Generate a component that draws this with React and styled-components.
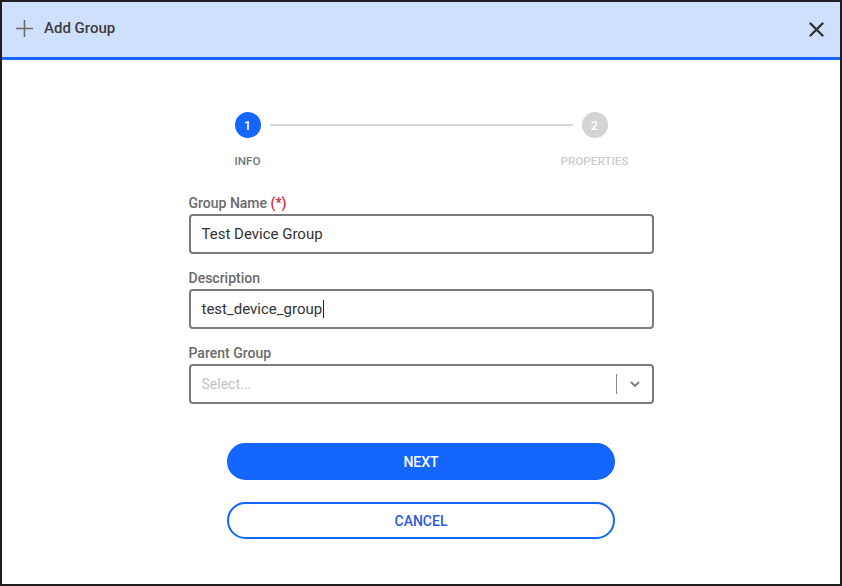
import React from 'react'
import styled, { createGlobalStyle } from 'styled-components'

const GlobalStyle = createGlobalStyle`
  html, body {
    margin: 0;
    padding: 0;
    background: #fff;
  }
  body {
    font-family: Roboto, "Liberation Sans", Arial, sans-serif;
  }
`

const Frame = styled.div`
  width: 842px;
  height: 586px;
  box-sizing: border-box;
  border: 2px solid #1f1f1f;
  display: flex;
  flex-direction: column;
  background: #fff;
`

const Header = styled.header`
  height: 55px;
  flex-shrink: 0;
  display: flex;
  align-items: center;
  padding: 0 16px 0 13px;
  background: #cfe0fc;
  border-bottom: 3px solid #1565ff;
`

const HeaderLead = styled.div`
  flex: 1;
  display: flex;
  align-items: center;
  gap: 10px;
  margin-bottom: 3px;
`

const Title = styled.h1`
  margin: 0;
  font-size: 15px;
  font-weight: 500;
  color: #3d3d3d;
`

const IconButton = styled.button`
  border: 0;
  background: none;
  padding: 0;
  display: flex;
  cursor: pointer;
`

const Body = styled.main`
  flex: 1;
  display: flex;
  flex-direction: column;
  align-items: center;
  padding-top: 52px;
`

const Stepper = styled.div`
  display: flex;
  width: 373px;
`

const Step = styled.div`
  width: 26px;
  display: flex;
  flex-direction: column;
  align-items: center;
  gap: 17px;
`

const Circle = styled.div`
  width: 26px;
  height: 26px;
  border-radius: 50%;
  background: ${p => (p.$active ? '#1565ff' : '#d3d3d3')};
  color: #fff;
  font-size: 13px;
  font-weight: 500;
  display: flex;
  align-items: center;
  justify-content: center;
`

const StepLabel = styled.span`
  white-space: nowrap;
  font-size: 11.7px;
  line-height: 13px;
  font-weight: 500;
  color: ${p => (p.$active ? '#757575' : '#cdcdcd')};
`

const Connector = styled.div`
  flex: 1;
  height: 2px;
  margin: 12px 9px 0;
  background: #d6d6d6;
`

const Form = styled.form`
  width: 465px;
  margin-top: 27px;
  display: flex;
  flex-direction: column;
  gap: 16px;
`

const Field = styled.div`
  display: flex;
  flex-direction: column;
  gap: 3px;
`

const Label = styled.label`
  font-size: 14px;
  line-height: 16px;
  font-weight: 500;
  color: #6b6b6b;
`

const Required = styled.span`
  color: #d0283a;
`

const TextBox = styled.div`
  height: 40px;
  box-sizing: border-box;
  border: 2px solid #7a7a7a;
  border-radius: 4px;
  padding: 0 11px;
  display: flex;
  align-items: center;
  font-size: 15px;
  color: ${p => (p.$placeholder ? '#c2c2c2' : '#333')};
  ${p => p.$placeholder && 'font-size: 14px;'}
`

const Caret = styled.span`
  width: 1px;
  height: 18px;
  background: #222;
  margin-left: 1px;
`

const SelectValue = styled.span`
  flex: 1;
`

const Divider = styled.span`
  width: 1px;
  height: 20px;
  background: #8a8a8a;
  margin-right: 12px;
`

const Actions = styled.div`
  width: 388px;
  margin-top: 39px;
  display: flex;
  flex-direction: column;
  gap: 22px;
`

const Button = styled.button`
  height: 37px;
  border-radius: 19px;
  border: 2px solid #1565ff;
  background: ${p => (p.$primary ? '#1565ff' : '#fff')};
  color: ${p => (p.$primary ? '#fff' : '#2b58e8')};
  font-family: inherit;
  font-size: 14px;
  font-weight: 500;
  cursor: pointer;
`

const PlusIcon = () => (
  <svg width="19" height="19" viewBox="0 0 19 19">
    <path d="M9.5 1v17M1 9.5h17" stroke="#6b6b6b" strokeWidth="1.6" fill="none" />
  </svg>
)

const CloseIcon = () => (
  <svg width="15" height="15" viewBox="0 0 15 15">
    <path d="M1.5 1.5l12 12M13.5 1.5l-12 12" stroke="#333" strokeWidth="2.4" strokeLinecap="round" fill="none" />
  </svg>
)

const ChevronIcon = () => (
  <svg width="12" height="8" viewBox="0 0 12 8">
    <path d="M2 2l4 4 4-4" stroke="#777" strokeWidth="1.8" fill="none" />
  </svg>
)

const steps = [
  { n: 1, label: 'INFO', active: true },
  { n: 2, label: 'PROPERTIES', active: false },
]

export default function App() {
  return (
    <>
      <GlobalStyle />
      <Frame>
        <Header>
          <HeaderLead>
            <PlusIcon />
            <Title>Add Group</Title>
          </HeaderLead>
          <IconButton aria-label="close">
            <CloseIcon />
          </IconButton>
        </Header>
        <Body>
          <Stepper>
            {steps.map((step, i) => (
              <React.Fragment key={step.n}>
                {i > 0 && <Connector />}
                <Step>
                  <Circle $active={step.active}>{step.n}</Circle>
                  <StepLabel $active={step.active}>{step.label}</StepLabel>
                </Step>
              </React.Fragment>
            ))}
          </Stepper>
          <Form onSubmit={e => e.preventDefault()}>
            <Field>
              <Label>
                Group Name <Required>(*)</Required>
              </Label>
              <TextBox>Test Device Group</TextBox>
            </Field>
            <Field>
              <Label>Description</Label>
              <TextBox>
                test_device_group
                <Caret />
              </TextBox>
            </Field>
            <Field>
              <Label>Parent Group</Label>
              <TextBox $placeholder>
                <SelectValue>Select...</SelectValue>
                <Divider />
                <ChevronIcon />
              </TextBox>
            </Field>
          </Form>
          <Actions>
            <Button $primary>NEXT</Button>
            <Button>CANCEL</Button>
          </Actions>
        </Body>
      </Frame>
    </>
  )
}
